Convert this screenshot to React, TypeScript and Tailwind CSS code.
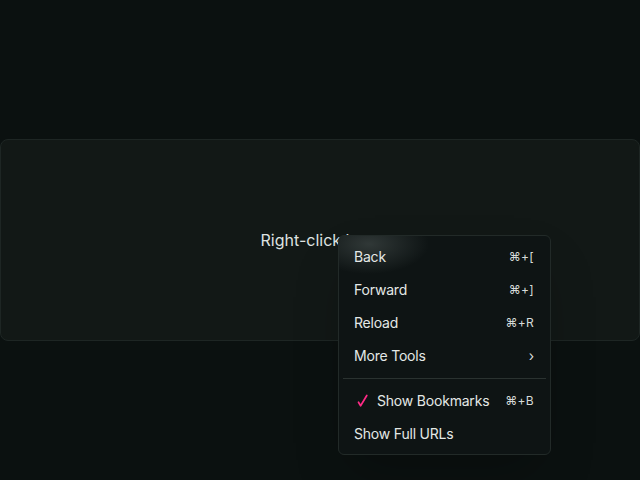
import React from 'react';

type Item = {
  label: string;
  shortcut?: string;
  submenu?: boolean;
  checked?: boolean;
};

const mainItems: Item[] = [
  { label: 'Back', shortcut: '⌘+[' },
  { label: 'Forward', shortcut: '⌘+]' },
  { label: 'Reload', shortcut: '⌘+R' },
  { label: 'More Tools', submenu: true },
];

const viewItems: Item[] = [
  { label: 'Show Bookmarks', shortcut: '⌘+B', checked: true },
  { label: 'Show Full URLs' },
];

function CheckMark() {
  return (
    <svg width="12" height="14" viewBox="0 0 12 14" className="mr-[8px] ml-[3px]">
      <path
        d="M1.5 8.2 L3.6 11.8 L9.8 1.5"
        fill="none"
        stroke="#ff2a86"
        strokeWidth="1.7"
        strokeLinecap="round"
        strokeLinejoin="round"
      />
    </svg>
  );
}

function MenuRow({ item }: { item: Item }) {
  return (
    <div className="flex h-[33px] items-center justify-between rounded px-[11px] text-[14px] tracking-[-0.2px] text-[#e4e8e6]">
      <div className="flex items-center">
        {item.checked && <CheckMark />}
        <span>{item.label}</span>
      </div>
      {item.shortcut && (
        <span className="mr-[1px] text-[12px] tracking-[0.3px] text-[#d6dbd9]">{item.shortcut}</span>
      )}
      {item.submenu && <span className="mr-[1px] text-[14px] text-[#d6dbd9]">›</span>}
    </div>
  );
}

export default function App() {
  return (
    <div
      className="relative flex h-[480px] w-[640px] items-center overflow-hidden bg-[#0b1110]"
      style={{ fontFamily: 'Inter, "Noto Sans", sans-serif' }}
    >
      {/* target area */}
      <div className="flex h-[202px] w-full items-center justify-center rounded-lg border border-[#1e2624] bg-[#121816]">
        <span className="text-[16px] text-[#dfe3e1]">Right-click here</span>
      </div>

      {/* context menu */}
      <div
        className="absolute left-[338px] top-[235px] w-[213px] rounded-md border border-[#222a28] px-[4px] pt-[4px] pb-[4px] shadow-2xl"
        style={{
          background:
            'radial-gradient(ellipse 60px 30px at 30px 8px, rgba(90,100,98,0.45), rgba(14,20,20,0) 100%), #0e1414',
        }}
      >
        {mainItems.map((item) => (
          <MenuRow key={item.label} item={item} />
        ))}
        <div className="mt-[6px] mb-[5px] h-px bg-[#2a3230]" />
        {viewItems.map((item) => (
          <MenuRow key={item.label} item={item} />
        ))}
      </div>
    </div>
  );
}
